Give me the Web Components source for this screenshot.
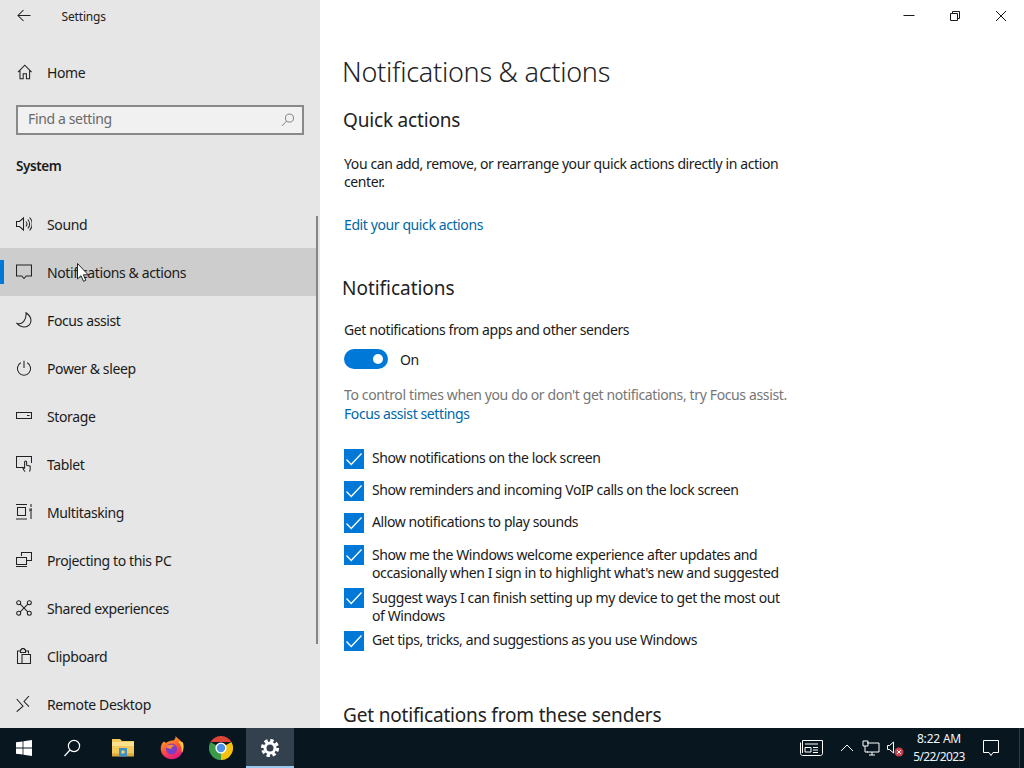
<!DOCTYPE html>
<html>
<head>
<meta charset="utf-8">
<title>Settings</title>
<style>
  html, body { margin: 0; padding: 0; height: 100%; overflow: hidden; background: #fff; }
  body { font-family: "Noto Sans", "Open Sans", sans-serif; }
</style>
</head>
<body>
<settings-desktop></settings-desktop>

<script>
const ICONS = {
  back: '<path d="M2 7.5H14.5M7.5 2L2 7.5L7.5 13"/>',
  home: '<path d="M2 8.2L8.8 1.2L15.6 8.2M4 6.4V14.8H7.2V9.8H10.4V14.8H13.6V6.4"/>',
  search: '<circle cx="9.7" cy="5.8" r="4.6"/><path d="M6.4 9.2L1 14.8"/>',
  sound: '<path d="M.5 5.5H3.5L7.5 2V14L3.5 10.5H.5ZM9.8 5.5A3.6 3.6 0 0 1 9.8 10.5M11.8 3.5A6.4 6.4 0 0 1 11.8 12.5M13.6 1.5A9.4 9.4 0 0 1 13.6 14.5"/>',
  notifications: '<path d="M.5 1H15.5V12H10.2L8 14.5L5.8 12H.5Z"/>',
  focus: '<path d="M10 .8C13 2.8 15 5.5 15 8.5A6.5 6.5 0 0 1 8.5 15C5.6 15 3 13.8 1 11.4C6.2 13 10.8 7.8 10 .8Z"/>',
  power: '<path d="M8 .8V8M4.8 2.8A6.6 6.6 0 1 0 11.2 2.8"/>',
  storage: '<path d="M.5 4.5H15.5V10.5H.5ZM11 7.5H13.5"/>',
  tablet: '<path d="M7 11.5H.5V.5H15.5V7M9.2 15.5C7.8 14.5 7 13.2 6.8 11.5L8.6 12V6A1 1 0 0 1 10.6 6V9.2L14.2 10.2V13.2C14.2 14 13.9 14.9 13.4 15.5"/>',
  multitasking: '<path d="M0 .5H11M0 15H11M1.5 3.5H9.5V11.5H1.5ZM15 0V3M15 8V15M14 5H16V7H14Z"/>',
  projecting: '<path d="M5.5 4V.5H15.5V8.5H11M.5 5.5H10.5V12.5H.5ZM0 14.5H11"/>',
  shared: '<circle cx="2.7" cy="2.7" r="2"/><circle cx="13.3" cy="2.7" r="2"/><circle cx="2.7" cy="13.3" r="2"/><circle cx="13.3" cy="13.3" r="2"/><path d="M4.2 4.2L11.8 11.8M11.8 4.2L4.2 11.8"/>',
  clipboard: '<path d="M4.5 3H1.5V15.5H6M9.5 3H12.5V5.5M4.5 4.5V1.8H5.8V.5H8.2V1.8H9.5V4.5ZM6 6.5H14.5V15.5H6Z"/>',
  remote: '<path d="M.7 3L7 10.2L.7 15.7M13 0L8 5.5L13 10.7"/>'
};

function svgIcon(name, size) {
  return `<svg width="${size}" height="${size}" viewBox="0 0 16 16" fill="none" stroke="currentColor" stroke-width="1.05">${ICONS[name]}</svg>`;
}

const navTemplate = document.createElement('template');
navTemplate.innerHTML = `
  <style>
    :host { display: block; height: 48px; position: relative; }
    .row { display: flex; align-items: center; height: 100%; padding-left: 16px; gap: 15px; color: #1b1b1b; font-size: 14px; letter-spacing: -.38px; }
    .icon { width: 16px; height: 16px; display: flex; color: #222; }
    :host([active]) .row { background: #cdcdcd; }
    :host([active]) .row::before { content: ""; position: absolute; left: 0; top: 12px; width: 4px; height: 24px; background: #0078d7; }
  </style>
  <div class="row"><span class="icon"></span><span><slot></slot></span></div>
`;

class NavItem extends HTMLElement {
  constructor() {
    super();
    this.attachShadow({ mode: 'open' }).appendChild(navTemplate.content.cloneNode(true));
    this.shadowRoot.querySelector('.icon').innerHTML = svgIcon(this.getAttribute('icon'), 16);
  }
}
customElements.define('nav-item', NavItem);

const searchTemplate = document.createElement('template');
searchTemplate.innerHTML = `
  <style>
    :host { display: block; height: 30px; margin: 9px 16px 0; }
    .box { box-sizing: border-box; height: 100%; display: flex; align-items: center; justify-content: space-between; padding: 0 7px 4px 10px; border: 2px solid #898989; background: #f1f1f1; color: #6a6a6a; font-size: 14px; letter-spacing: -.36px; }
    svg { display: block; color: #777; margin-top: 4px; }
  </style>
  <div class="box"><span><slot></slot></span></div>
`;

class SearchBox extends HTMLElement {
  constructor() {
    super();
    this.attachShadow({ mode: 'open' }).appendChild(searchTemplate.content.cloneNode(true));
    this.shadowRoot.querySelector('.box').insertAdjacentHTML('beforeend', svgIcon('search', 14));
  }
}
customElements.define('search-box', SearchBox);

const sidebarTemplate = document.createElement('template');
sidebarTemplate.innerHTML = `
  <style>
    :host { display: block; width: 320px; flex: none; height: 100%; background: #e6e6e6; position: relative; overflow: hidden; }
    .title { height: 32px; display: flex; align-items: center; color: #222; }
    .back { width: 48px; padding-left: 16px; box-sizing: border-box; display: flex; }
    .name { margin-left: 13.5px; font-size: 12px; letter-spacing: -.16px; }
    .home { margin-top: 16px; }
    .system { margin: 19px 0 0 16px; height: 24px; line-height: 24px; font-size: 13.5px; font-weight: 600; letter-spacing: -.42px; color: #1b1b1b; }
    .list { margin: 22px 2px 0 0; }
    .scroll { position: absolute; left: 316px; top: 216px; width: 2px; height: 428px; background: #858585; }
  </style>
  <div class="title"><span class="back">${svgIcon('back', 16)}</span><span class="name">Settings</span></div>
  <nav-item class="home" icon="home">Home</nav-item>
  <search-box>Find a setting</search-box>
  <div class="system">System</div>
  <div class="list">
    <nav-item icon="sound">Sound</nav-item>
    <nav-item icon="notifications" active>Notifications &amp; actions</nav-item>
    <nav-item icon="focus">Focus assist</nav-item>
    <nav-item icon="power">Power &amp; sleep</nav-item>
    <nav-item icon="storage">Storage</nav-item>
    <nav-item icon="tablet">Tablet</nav-item>
    <nav-item icon="multitasking">Multitasking</nav-item>
    <nav-item icon="projecting">Projecting to this PC</nav-item>
    <nav-item icon="shared">Shared experiences</nav-item>
    <nav-item icon="clipboard">Clipboard</nav-item>
    <nav-item icon="remote">Remote Desktop</nav-item>
  </div>
  <div class="scroll"></div>
`;

class SettingsSidebar extends HTMLElement {
  constructor() {
    super();
    this.attachShadow({ mode: 'open' }).appendChild(sidebarTemplate.content.cloneNode(true));
  }
}
customElements.define('settings-sidebar', SettingsSidebar);

const toggleTemplate = document.createElement('template');
toggleTemplate.innerHTML = `
  <style>
    :host { display: flex; align-items: center; gap: 12px; height: 20px; }
    .track { width: 44px; height: 20px; border-radius: 10px; background: #0078d7; position: relative; }
    .knob { position: absolute; right: 5px; top: 5px; width: 10px; height: 10px; border-radius: 50%; background: #fff; }
  </style>
  <span class="track"><span class="knob"></span></span><span><slot></slot></span>
`;

class ToggleSwitch extends HTMLElement {
  constructor() {
    super();
    this.attachShadow({ mode: 'open' }).appendChild(toggleTemplate.content.cloneNode(true));
  }
}
customElements.define('toggle-switch', ToggleSwitch);

const checkTemplate = document.createElement('template');
checkTemplate.innerHTML = `
  <style>
    :host { display: flex; gap: 8px; min-height: 25px; margin-bottom: 7px; line-height: 18px; }
    :host([two]) { margin-bottom: 6px; }
    :host([two]) .text { padding-top: 1px; }
    .box { flex: none; width: 20px; height: 20px; background: #0078d7; display: flex; }
    svg { display: block; }
  </style>
  <span class="box"><svg width="20" height="20" viewBox="0 0 20 20" fill="none" stroke="#fff" stroke-width="1.3"><path d="M2.5 10.5L7.2 15.5L17.5 4.5"/></svg></span>
  <span class="text"><slot></slot></span>
`;

class CheckRow extends HTMLElement {
  constructor() {
    super();
    this.attachShadow({ mode: 'open' }).appendChild(checkTemplate.content.cloneNode(true));
  }
}
customElements.define('check-row', CheckRow);

const mainTemplate = document.createElement('template');
mainTemplate.innerHTML = `
  <style>
    :host { display: block; flex: 1; height: 100%; background: #fff; overflow: hidden; color: #1a1a1a; font-size: 14px; letter-spacing: -.4px; }
    .caption { height: 32px; display: flex; justify-content: flex-end; color: #1a1a1a; }
    .caption span { width: 46px; display: flex; align-items: center; justify-content: center; }
    .content { padding-left: 24px; }
    h1 { margin: 20px 0 0 -2px; height: 40px; line-height: 40px; font-size: 27px; font-weight: 300; letter-spacing: -.26px; color: #222; }
    h2 { margin: 0 0 0 -1px; height: 28px; line-height: 28px; font-size: 19px; font-weight: 400; letter-spacing: -.18px; color: #222; }
    p { margin: 0; line-height: 18px; }
    a { color: #0067a8; text-decoration: none; display: block; line-height: 18px; }
    .grey { color: #767676; letter-spacing: -.37px; }
    .checks { margin-top: 26px; }
  </style>
  <div class="caption">
    <span><svg width="12" height="12" viewBox="0 0 12 12" stroke="currentColor"><path d="M.5 5.5H11.5"/></svg></span>
    <span><svg width="12" height="12" viewBox="0 0 12 12" fill="none" stroke="currentColor"><path d="M1.5 3.5H8.5V10.5H1.5ZM3.5 3.5V1.5H10.5V8.5H8.5"/></svg></span>
    <span><svg width="12" height="12" viewBox="0 0 12 12" fill="none" stroke="currentColor"><path d="M1 1L11 11M11 1L1 11"/></svg></span>
  </div>
  <div class="content">
    <h1>Notifications &amp; actions</h1>
    <h2 style="margin-top:14px">Quick actions</h2>
    <p style="margin-top:21px">You can add, remove, or rearrange your quick actions directly in action<br>center.</p>
    <a style="margin-top:25px">Edit your quick actions</a>
    <h2 style="margin-top:40px;margin-left:-2px;letter-spacing:-.03px">Notifications</h2>
    <p style="margin-top:19px">Get notifications from apps and other senders</p>
    <toggle-switch style="margin-top:10px">On</toggle-switch>
    <p class="grey" style="margin-top:17px">To control times when you do or don't get notifications, try Focus assist.</p>
    <a style="margin-top:1px">Focus assist settings</a>
    <div class="checks">
      <check-row>Show notifications on the lock screen</check-row>
      <check-row>Show reminders and incoming VoIP calls on the lock screen</check-row>
      <check-row>Allow notifications to play sounds</check-row>
      <check-row two>Show me the Windows welcome experience after updates and<br>occasionally when I sign in to highlight what's new and suggested</check-row>
      <check-row two>Suggest ways I can finish setting up my device to get the most out<br>of Windows</check-row>
      <check-row>Get tips, tricks, and suggestions as you use Windows</check-row>
    </div>
    <h2 style="margin-top:45px">Get notifications from these senders</h2>
  </div>
`;

class SettingsMain extends HTMLElement {
  constructor() {
    super();
    this.attachShadow({ mode: 'open' }).appendChild(mainTemplate.content.cloneNode(true));
  }
}
customElements.define('settings-main', SettingsMain);

const cellTemplate = document.createElement('template');
cellTemplate.innerHTML = `
  <style>
    :host { display: flex; align-items: center; justify-content: center; flex: none; height: 40px; box-sizing: border-box; color: #fff; }
    :host([active]) { background: #33414e; border-bottom: 2px solid #9ac9ee; padding-top: 2px; }
  </style>
  <slot></slot>
`;

class TaskCell extends HTMLElement {
  constructor() {
    super();
    this.attachShadow({ mode: 'open' }).appendChild(cellTemplate.content.cloneNode(true));
  }
}
customElements.define('task-cell', TaskCell);

const clockTemplate = document.createElement('template');
clockTemplate.innerHTML = `
  <style>
    :host { display: block; width: 64px; flex: none; text-align: center; color: #f2f4f5; font-size: 12px; line-height: 18px; letter-spacing: -.2px; }
    .date { letter-spacing: -.6px; }
  </style>
  <div><slot name="time"></slot></div>
  <div class="date"><slot name="date"></slot></div>
`;

class TrayClock extends HTMLElement {
  constructor() {
    super();
    this.attachShadow({ mode: 'open' }).appendChild(clockTemplate.content.cloneNode(true));
  }
}
customElements.define('tray-clock', TrayClock);

const taskbarTemplate = document.createElement('template');
taskbarTemplate.innerHTML = `
  <style>
    :host { display: flex; align-items: center; height: 40px; flex: none; background: #081620; }
    .spacer { flex: 1; }
    svg { display: block; }
  </style>
  <task-cell style="width:48px"><svg width="16" height="16" viewBox="0 0 16 16" fill="#fff"><path d="M0 2.3L6.6 1.4V7.6H0ZM7.4 1.3L16 0V7.6H7.4ZM0 8.4H6.6V14.6L0 13.7ZM7.4 8.4H16V16L7.4 14.7Z"/></svg></task-cell>
  <task-cell style="width:48px"><svg width="18" height="18" viewBox="0 0 18 18" fill="none" stroke="#fff" stroke-width="1.2"><circle cx="11" cy="7" r="5.6"/><path d="M7 11L1.5 17"/></svg></task-cell>
  <task-cell style="width:49px;margin-left:2px"><svg width="24" height="20" viewBox="0 0 24 20"><path d="M1 1H9L11 3H23V18H1Z" fill="#f3c95a"/><path d="M1 4H23V8H1Z" fill="#fbe08f"/><path d="M1 15.5H23V18.5H1Z" fill="#d9a93e"/><path d="M8 10H16V18.5H8Z" fill="#3d8fc6"/><path d="M10.5 12.5H13.5V15.5H10.5Z" fill="#f3d777"/></svg></task-cell>
  <task-cell style="width:49px"><svg width="24" height="24" viewBox="0 0 24 24"><defs><linearGradient id="ff" x1="0.2" y1="0" x2="0.6" y2="1"><stop offset="0" stop-color="#ffb32c"/><stop offset=".5" stop-color="#ff5a30"/><stop offset="1" stop-color="#e31587"/></linearGradient></defs><path d="M15.5 0C17 2 20 3.5 21.2 5.5L23 6.5C24 12 23 18 18 21.5C13 24.5 6 23.5 2.5 18.5C-.5 14 .5 8 4 5.5L6 7C8 5 11 4.2 13.5 4.5C15 3.5 15.8 2 15.5 0Z" fill="url(#ff)"/><path d="M20 5L23 7C24 11 23.5 14 22 17C21.5 12 21 8 18 6Z" fill="#ffca3c"/><circle cx="11.5" cy="13" r="5.5" fill="#7a3fc4"/><path d="M6 11C8 8.5 13 8 15 10.5C12.5 10 11 11 12 12.5C9.5 13 8 12.5 6 11Z" fill="#ff8a3c"/></svg></task-cell>
  <task-cell style="width:49px"><svg width="24" height="24" viewBox="0 0 24 24"><path d="M1.6 6A12 12 0 0 1 22.4 6H12Z" fill="#db4437"/><path d="M22.4 6A12 12 0 0 1 12 24L12 12Z" fill="#f4c20d"/><path d="M12 24A12 12 0 0 1 1.6 6L12 12Z" fill="#3c9a4b"/><circle cx="12" cy="12" r="5.6" fill="#fff"/><circle cx="12" cy="12" r="4.2" fill="#4a8fe8"/></svg></task-cell>
  <task-cell style="width:48px;margin-left:1px" active><svg width="20" height="20" viewBox="0 0 20 20" fill="none" stroke="#fff"><circle cx="10" cy="10" r="5" stroke-width="3"/><circle cx="10" cy="10" r="7.6" stroke-width="3" stroke-dasharray="3.4 2.57"/></svg></task-cell>
  <span class="spacer"></span>
  <task-cell style="width:48px"><svg width="24" height="16" viewBox="0 0 24 16" fill="none" stroke="#fff"><path d="M1.5 2.5V13.5C1.5 14.5 2.5 15.5 3.5 15.5H21.5C22.5 15.5 23.5 14.5 23.5 13.5V.5H3.5V13M6 4H19M6 7.5H12V12H6ZM14 7.5H19M14 10H19M14 12.5H19"/></svg></task-cell>
  <task-cell style="width:24px"><svg width="14" height="10" viewBox="0 0 14 10" fill="none" stroke="#fff"><path d="M1 8L7 2L13 8"/></svg></task-cell>
  <task-cell style="width:24px"><svg width="18" height="16" viewBox="0 0 18 16" fill="none" stroke="#fff"><path d="M5 3H17V12H5M10 12V15M7 15H13M1 1H6V6H1ZM3 6V12H6"/></svg></task-cell>
  <task-cell style="width:24px"><svg width="18" height="18" viewBox="0 0 18 18" fill="none" stroke="#fff"><path d="M1.5 6.5H3.5L7.5 3V14L3.5 10.5H1.5Z"/><circle cx="13" cy="13" r="4.5" fill="#c8404a" stroke="none"/><path d="M11 11L15 15M15 11L11 15" stroke="#fff"/></svg></task-cell>
  <tray-clock><span slot="time">8:22 AM</span><span slot="date">5/22/2023</span></tray-clock>
  <task-cell style="width:40px"><svg width="18" height="18" viewBox="0 0 18 18" fill="none" stroke="#fff"><path d="M1.5 1.5H16.5V13.5H11L9 16.5L7 13.5H1.5Z"/></svg></task-cell>
  <task-cell style="width:13px;justify-content:flex-start"><span style="display:block;width:1px;height:40px;margin-left:8px;background:#2f3a44"></span></task-cell>
`;

class WinTaskbar extends HTMLElement {
  constructor() {
    super();
    this.attachShadow({ mode: 'open' }).appendChild(taskbarTemplate.content.cloneNode(true));
  }
}
customElements.define('win-taskbar', WinTaskbar);

const desktopTemplate = document.createElement('template');
desktopTemplate.innerHTML = `
  <style>
    :host { display: flex; flex-direction: column; width: 1024px; height: 768px; position: relative; overflow: hidden; }
    .window { display: flex; height: 728px; flex: none; }
    .cursor { position: absolute; left: 77px; top: 263px; }
  </style>
  <div class="window">
    <settings-sidebar></settings-sidebar>
    <settings-main></settings-main>
  </div>
  <win-taskbar></win-taskbar>
  <svg class="cursor" width="12" height="19" viewBox="0 0 12 19"><path d="M.5 .5V16L4 12.7L6.5 18.3L8.8 17.3L6.4 11.8H11.2Z" fill="#fff" stroke="#222"/></svg>
`;

class SettingsDesktop extends HTMLElement {
  constructor() {
    super();
    this.attachShadow({ mode: 'open' }).appendChild(desktopTemplate.content.cloneNode(true));
  }
}
customElements.define('settings-desktop', SettingsDesktop);
</script>
</body>
</html>
